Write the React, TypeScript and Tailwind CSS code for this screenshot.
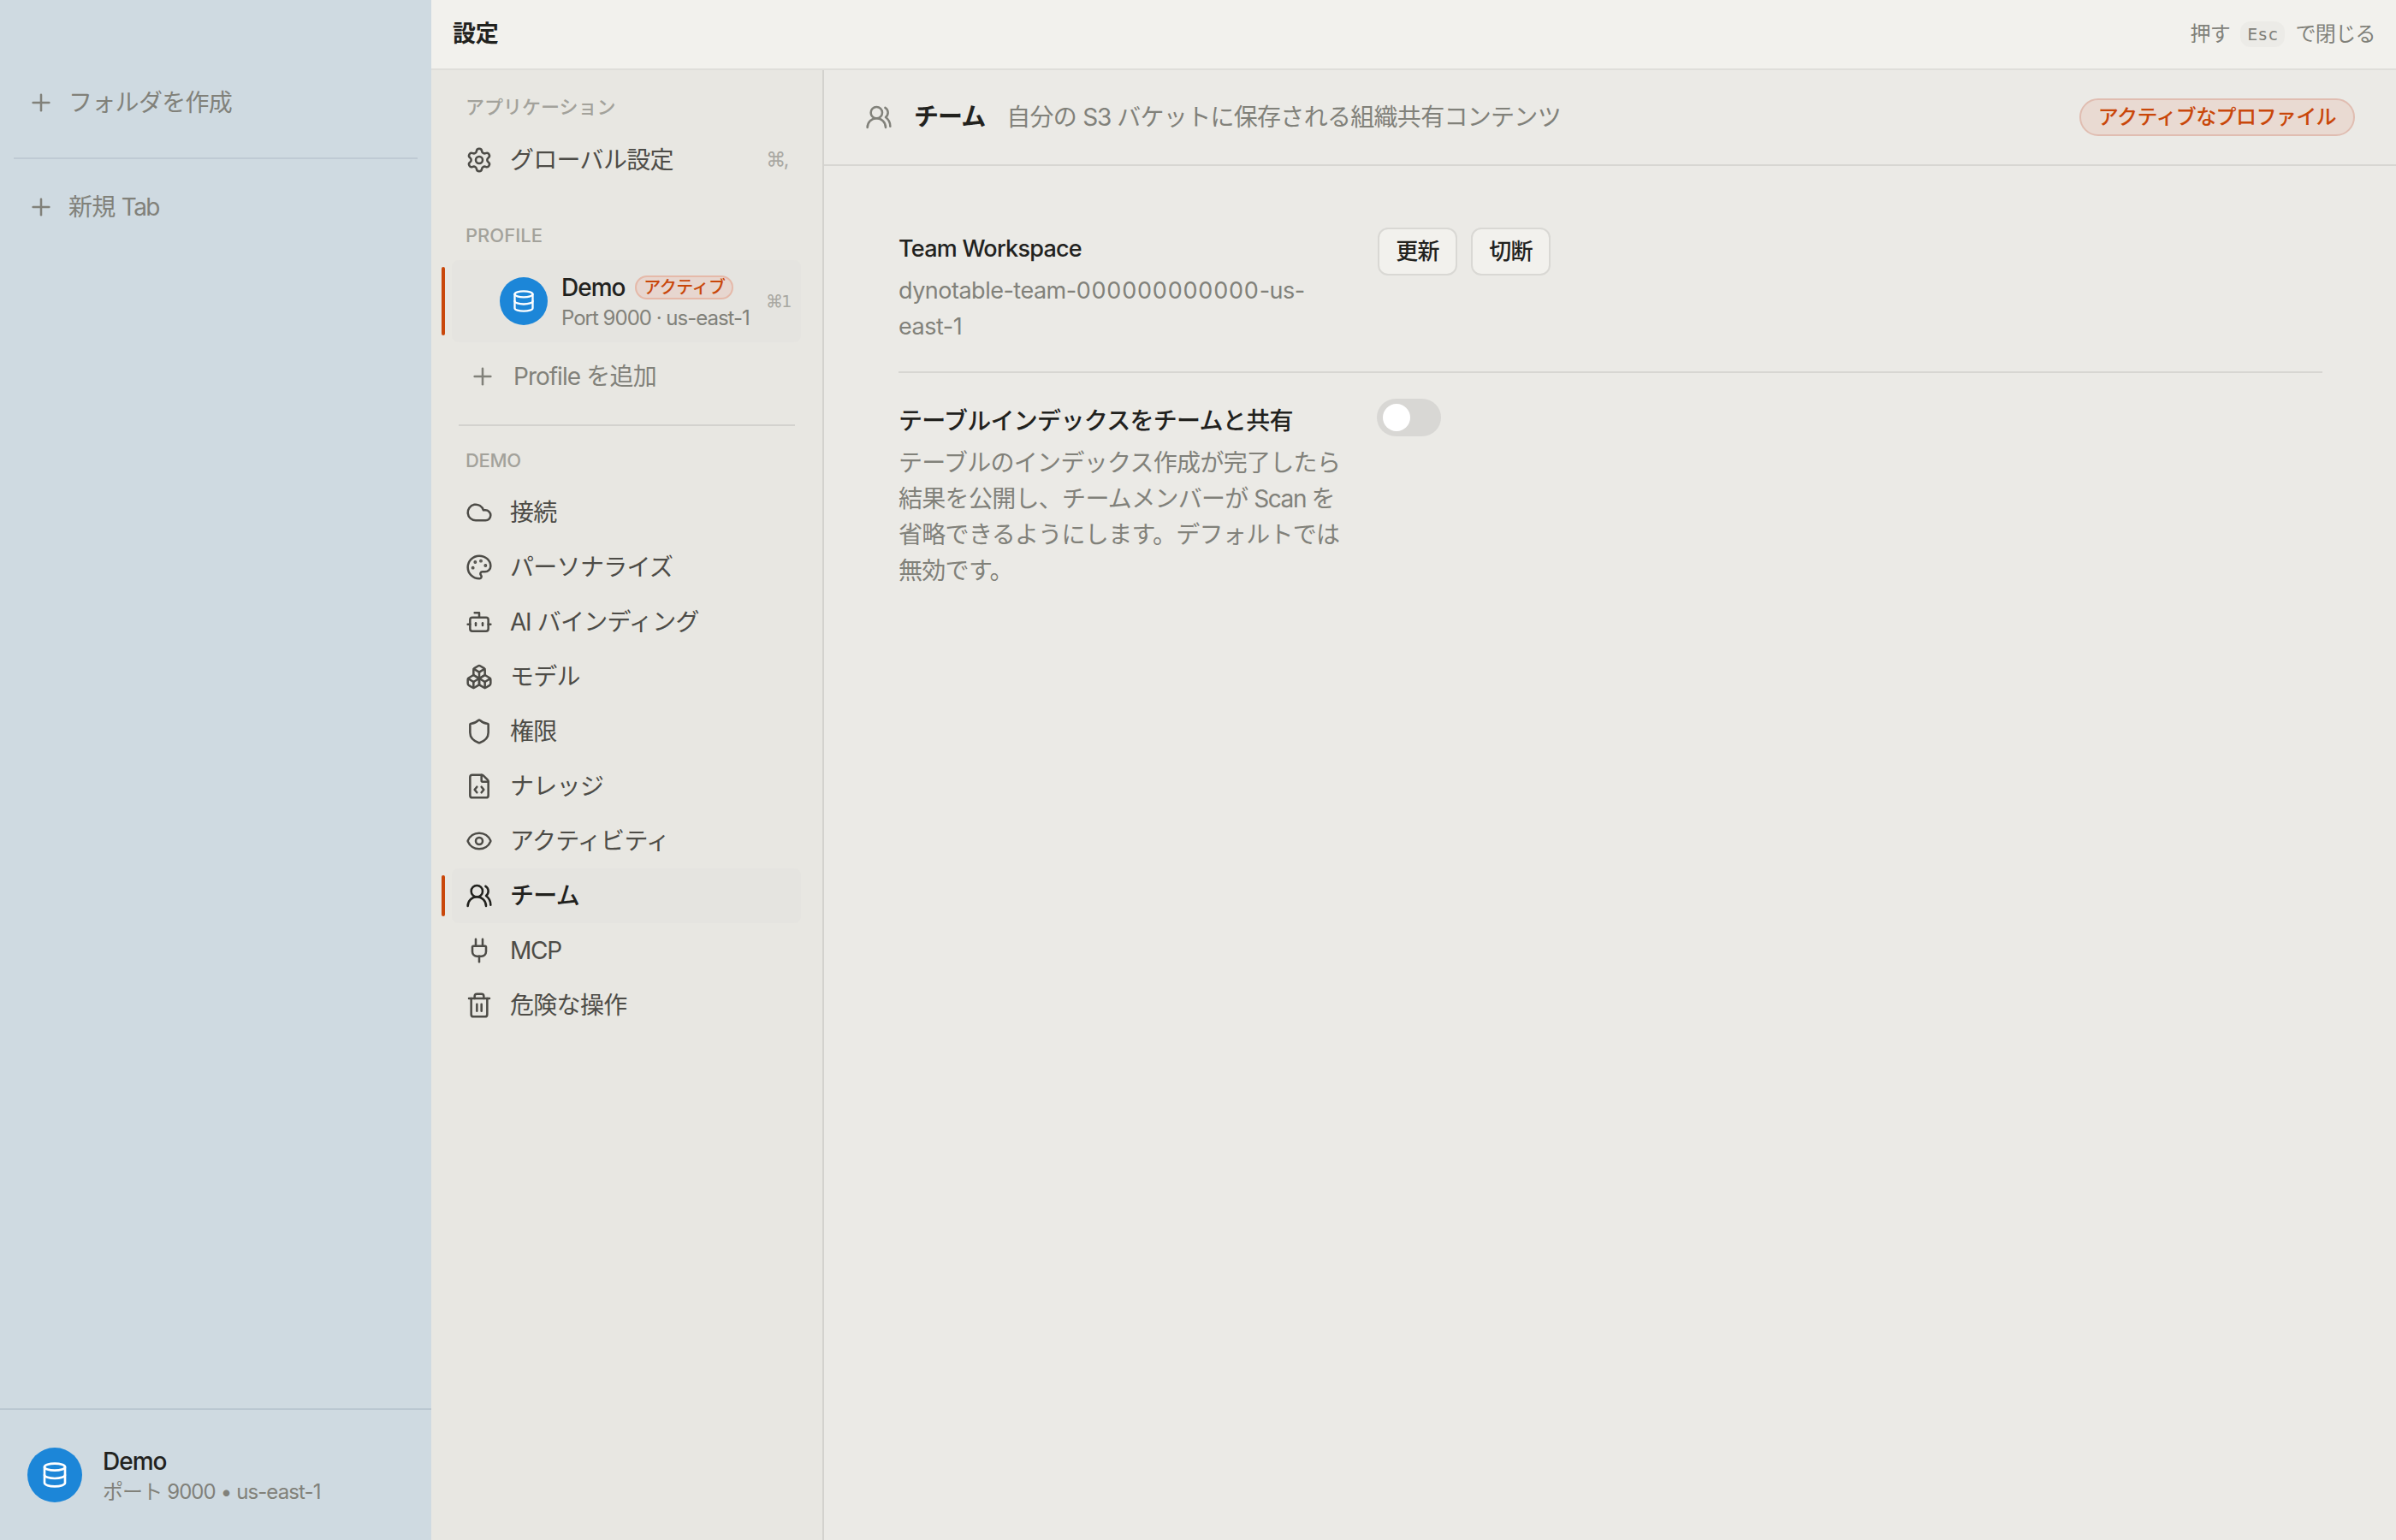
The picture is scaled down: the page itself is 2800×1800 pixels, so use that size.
import type { ReactNode } from "react";
import {
  Bot,
  Boxes,
  Cloud,
  Database,
  Eye,
  FileCode,
  Palette,
  Plug,
  Plus,
  Settings,
  Shield,
  Trash2,
  UsersRound,
  type LucideIcon,
} from "lucide-react";

type NavItem = { label: ReactNode; icon: LucideIcon; active?: boolean };

const NAV: NavItem[] = [
  { label: "接続", icon: Cloud },
  { label: "パーソナライズ", icon: Palette },
  {
    label: (
      <>
        <span className="tracking-[-1.2px]">AI</span> バインディング
      </>
    ),
    icon: Bot,
  },
  { label: "モデル", icon: Boxes },
  { label: "権限", icon: Shield },
  { label: "ナレッジ", icon: FileCode },
  { label: "アクティビティ", icon: Eye },
  { label: "チーム", icon: UsersRound, active: true },
  { label: <span className="tracking-[-1.2px]">MCP</span>, icon: Plug },
  { label: "危険な操作", icon: Trash2 },
];

function NavRow({ label, icon: Icon, active, hint }: NavItem & { hint?: ReactNode }) {
  return (
    <div
      className={
        active
          ? "relative flex h-16 items-center rounded-lg bg-[#e5e4e0] pl-4 pr-3 font-medium text-[#22221e]"
          : "relative flex h-16 items-center rounded-lg pl-4 pr-3 text-[#4d4c47]"
      }
    >
      {active && <span className="absolute -left-3 top-2 h-12 w-1 rounded-full bg-[#c9470a]" />}
      <Icon size={32} strokeWidth={1.9} className="shrink-0" />
      <span className="ml-5 flex-1 whitespace-nowrap">{label}</span>
      {hint}
    </div>
  );
}

function Sidebar() {
  return (
    <aside className="flex w-[504px] shrink-0 flex-col bg-[#cfdae1] text-[#81817a]">
      <div className="mt-[88px] flex h-16 items-center pl-8">
        <Plus size={32} strokeWidth={1.9} />
        <span className="ml-4">フォルダを作成</span>
      </div>
      <div className="mx-4 mt-8 h-0.5 bg-[#bfcad4]" />
      <div className="mt-6 flex h-16 items-center pl-8">
        <Plus size={32} strokeWidth={1.9} />
        <span className="ml-4">
          新規 <span className="tracking-[-1.6px]">Tab</span>
        </span>
      </div>
      <div className="flex-1" />
      <div className="flex h-[154px] items-center border-t-2 border-[#bac7d1] pl-8">
        <div className="flex size-16 items-center justify-center rounded-full bg-[#1c86d8] text-white">
          <Database size={32} strokeWidth={2} />
        </div>
        <div className="ml-6 mt-[3px] flex flex-col">
          <span className="text-[28px] font-medium leading-[36px] tracking-[-1px] text-[#22221e]">Demo</span>
          <span className="text-[24px] leading-[35px] tracking-[-0.9px]">ポート 9000 • us-east-1</span>
        </div>
      </div>
    </aside>
  );
}

function SettingsNav() {
  return (
    <nav className="flex w-[459px] shrink-0 flex-col border-r-2 border-[#d3d2ce] bg-[#e8e7e2] pl-6 pr-[25px]">
      <div className="mt-[23px] flex h-10 items-center pl-4 text-[22px] font-medium tracking-[0px] text-[#a3a29b]">
        アプリケーション
      </div>
      <div className="mt-2.5">
        <NavRow
          label="グローバル設定"
          icon={Settings}
          hint={<span className="mr-1 pb-0.5 text-[23px] tracking-[-2.5px] text-[#a9a8a2]">⌘,</span>}
        />
      </div>
      <div className="mt-9 flex h-10 items-center pl-4 text-[22px] font-medium tracking-[0px] text-[#a3a29b]">
        PROFILE
      </div>
      <div className="relative mt-[9px] flex h-24 items-center rounded-lg bg-[#e5e4e0] pl-14 pr-[11px]">
        <span className="absolute -left-3 top-2 h-20 w-1 rounded-full bg-[#c9470a]" />
        <div className="flex size-14 shrink-0 items-center justify-center rounded-full bg-[#1c86d8] text-white">
          <Database size={28} strokeWidth={2} />
        </div>
        <div className="ml-4 mt-[3px] flex flex-1 flex-col">
          <div className="flex h-9 items-center">
            <span className="text-[28px] font-medium tracking-[-1px] text-[#22221e]">Demo</span>
            <span className="ml-3 flex h-7 w-[115px] items-center justify-center rounded-full border-2 border-[#e5b9a9] bg-[#e7d6cf] text-[20px] font-medium leading-none tracking-[-0.5px] text-[#c9470a]">
              アクティブ
            </span>
          </div>
          <span className="whitespace-nowrap text-[24px] leading-[35px] tracking-[-1px] text-[#81817a]">
            Port 9000 · us-east-1
          </span>
        </div>
        <span className="flex items-center text-[20px] tracking-[-2px] text-[#a9a8a2]">
          ⌘<span className="font-['DejaVu_Sans_Mono',monospace] tracking-[0px]">1</span>
        </span>
      </div>
      <div className="mt-2 flex h-16 items-center pl-5 text-[#81817a]">
        <Plus size={32} strokeWidth={1.9} />
        <span className="ml-5">
          <span className="tracking-[-1px]">Profile</span> を追加
        </span>
      </div>
      <div className="ml-2 mr-[7px] mt-6 h-0.5 bg-[#d3d2ce]" />
      <div className="mt-5 flex h-10 items-center pl-4 text-[22px] font-medium tracking-[-0.3px] text-[#a3a29b]">
        DEMO
      </div>
      <div className="mt-[9px] flex flex-col">
        {NAV.map((item, i) => (
          <NavRow key={i} {...item} />
        ))}
      </div>
    </nav>
  );
}

function ActionButton({ children }: { children: ReactNode }) {
  return (
    <button className="flex h-14 w-[93px] items-center justify-center rounded-xl border-2 border-[#d9d8d4] bg-[#f2f1ed] text-[26px] font-medium tracking-[-0.7px] text-[#22221e]">
      {children}
    </button>
  );
}

function Content() {
  return (
    <main className="flex flex-1 flex-col bg-[#ebeae6]">
      <div className="flex h-28 items-center border-b-2 border-[#d7d6d2] pl-12 pr-12">
        <UsersRound size={32} strokeWidth={1.9} className="text-[#81817a]" />
        <h2 className="ml-[25px] text-[29px] font-bold tracking-[-1px] text-[#22221e]">チーム</h2>
        <span className="ml-[25px] text-[#81817a]">
          自分の <span className="tracking-[-1.2px]">S3</span> バケットに保存される組織共有コンテンツ
        </span>
        <span className="ml-auto flex h-11 items-center rounded-full border-2 border-[#e0bdb1] bg-[#e9dad2] px-5 pb-px text-[24px] font-medium leading-none tracking-[-0.6px] text-[#c9470a]">
          アクティブなプロファイル
        </span>
      </div>
      <div className="pl-[87px] pr-[86px] pt-10">
        <section className="flex h-[202px] border-b-2 border-[#d7d6d2] pt-8">
          <div className="w-[520px]">
            <div className="mt-px text-[27px] font-medium leading-[48px] tracking-[-0.75px] text-[#22221e]">
              Team Workspace
            </div>
            <div className="mt-1 whitespace-nowrap text-[27px] leading-[42px] tracking-[-0.5px] text-[#81817a]">
              dynotable-team-<span className="tracking-[0.8px]">000000000000</span>-us-
              <br />
              east-1
            </div>
          </div>
          <div className="ml-10 flex gap-4">
            <ActionButton>更新</ActionButton>
            <ActionButton>切断</ActionButton>
          </div>
        </section>
        <section className="flex pt-8">
          <div className="w-[519px]">
            <div className="mt-px font-medium leading-[46px] text-[#22221e]">テーブルインデックスをチームと共有</div>
            <div className="mt-[5px] whitespace-nowrap leading-[42px] text-[#81817a]">
              テーブルのインデックス作成が完了したら
              <br />
              結果を公開し、チームメンバーが<span className="tracking-[-1.4px]"> Scan </span>を
              <br />
              省略できるようにします。デフォルトでは
              <br />
              無効です。
            </div>
          </div>
          <div className="ml-10 mt-[-2px] flex h-11 w-[75px] items-center rounded-full bg-[#d8d7d4] pl-[7px]">
            <span className="size-8 rounded-full bg-white" />
          </div>
        </section>
      </div>
    </main>
  );
}

export default function App() {
  return (
    <div className="flex h-[1800px] w-[2800px] overflow-hidden font-['Inter','Noto_Sans_CJK_JP',sans-serif] text-[28px] leading-[40px] tracking-[-0.7px]">
      <Sidebar />
      <div className="flex flex-1 flex-col">
        <header className="flex h-[82px] items-center border-b-2 border-[#dfdeda] bg-[#f2f1ed] pl-[25px] pr-6">
          <h1 className="text-[27px] font-bold tracking-[-0.3px] text-[#22221e]">設定</h1>
          <div className="ml-auto flex items-center text-[24px] tracking-[-0.6px] text-[#81817a]">
            <span>押す</span>
            <kbd className="ml-3 mr-3 flex h-[30px] items-center rounded-xl bg-[#ecebe7] px-2 font-['DejaVu_Sans_Mono',monospace] text-[20px] tracking-[0px]">
              Esc
            </kbd>
            <span>で閉じる</span>
          </div>
        </header>
        <div className="flex flex-1">
          <SettingsNav />
          <Content />
        </div>
      </div>
    </div>
  );
}
